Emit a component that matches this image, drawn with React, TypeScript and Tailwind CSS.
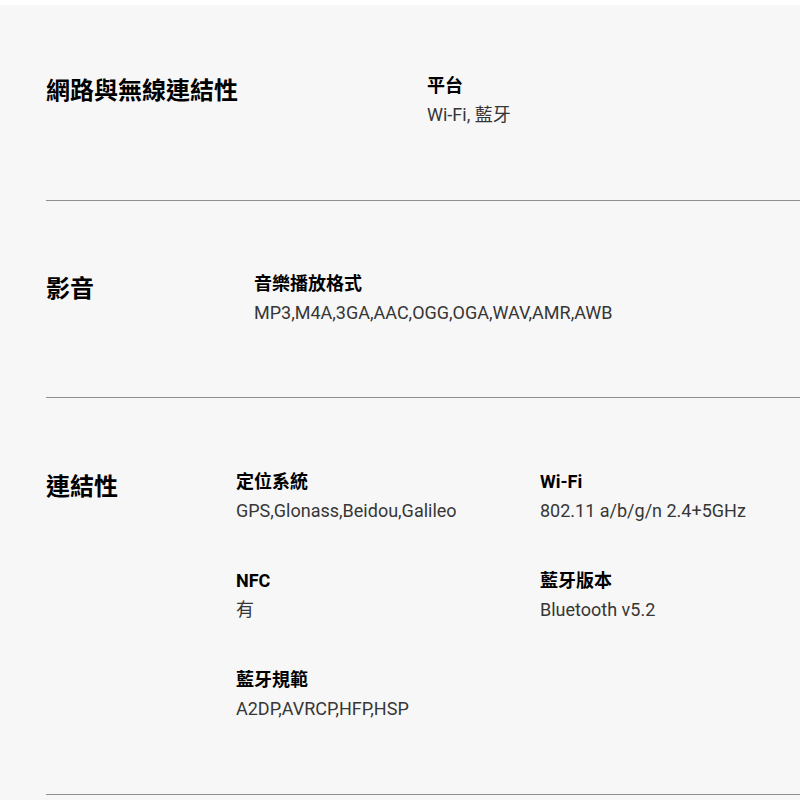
import React from "react";

const font = { fontFamily: 'Roboto, "Noto Sans CJK TC", sans-serif' };

function Item({ label, value }: { label: string; value: string }) {
  return (
    <div>
      <div className="text-[18px] leading-[26px] font-bold text-black">{label}</div>
      <div className="mt-[3px] text-[18px] leading-[26px] text-[#363636]">{value}</div>
    </div>
  );
}

export default function App() {
  return (
    <div className="min-h-[800px] bg-white pt-[5px]" style={font}>
      <div className="bg-[#f7f7f7] pl-[46px] min-h-[795px]">
        <section className="flex border-b border-[#8f8f8f] pt-[68px] pb-[72px]">
          <h2 className="mt-[2px] w-[381px] shrink-0 text-[24px] leading-[32px] font-bold text-black">網路與無線連結性</h2>
          <Item label="平台" value="Wi-Fi, 藍牙" />
        </section>
        <section className="flex border-b border-[#8f8f8f] pt-[70px] pb-[71px]">
          <h2 className="mt-[2px] w-[208px] shrink-0 text-[24px] leading-[32px] font-bold text-black">影音</h2>
          <Item label="音樂播放格式" value="MP3,M4A,3GA,AAC,OGG,OGA,WAV,AMR,AWB" />
        </section>
        <section className="flex border-b border-[#8f8f8f] pt-[71px] pb-[72px]">
          <h2 className="mt-[2px] w-[190px] shrink-0 text-[24px] leading-[32px] font-bold text-black">連結性</h2>
          <div className="grid grid-cols-[304px_1fr] gap-y-[44px]">
            <Item label="定位系統" value="GPS,Glonass,Beidou,Galileo" />
            <Item label="Wi-Fi" value="802.11 a/b/g/n 2.4+5GHz" />
            <Item label="NFC" value="有" />
            <Item label="藍牙版本" value="Bluetooth v5.2" />
            <Item label="藍牙規範" value="A2DP,AVRCP,HFP,HSP" />
          </div>
        </section>
      </div>
    </div>
  );
}
